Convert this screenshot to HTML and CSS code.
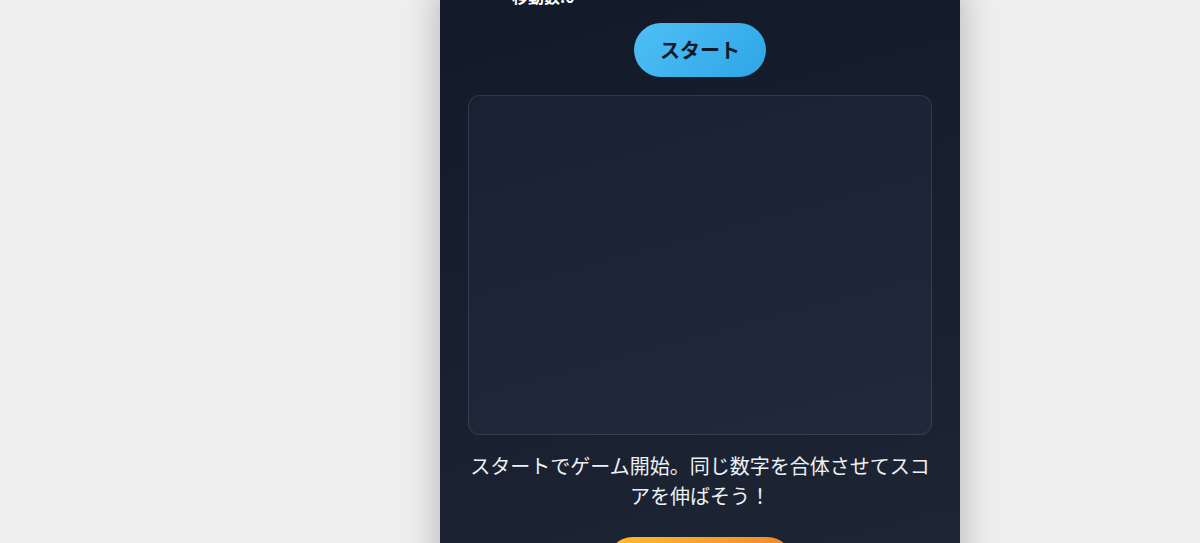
FILE: index.html
```html
<!DOCTYPE html>
<html lang="ja">
<head>
    <meta charset="UTF-8">
    <meta name="viewport" content="width=device-width, initial-scale=1.0">
    <title>2048</title>
    <link rel="stylesheet" href="styles.css">
</head>
<body>
    <div class="page">
        <div class="app">
            <div class="stats">
                <span class="stat">移動数:0</span>
            </div>

            <div class="controls">
                <button class="btn btn-start">スタート</button>
            </div>

            <div id="board" class="board"></div>

            <p class="hint">スタートでゲーム開始。同じ数字を合体させてスコアを伸ばそう！</p>

            <div class="controls">
                <button class="btn btn-reset">リセット</button>
            </div>
        </div>
    </div>
</body>
</html>
```

FILE: styles.css
```css
html, body {
    margin: 0;
    padding: 0;
}
body {
    font-family: "Noto Sans CJK JP", "Noto Sans", sans-serif;
    background-color: #efefef;
    overflow: hidden;
}
.page {
    display: flex;
    justify-content: center;
    padding-left: 200px;
}
.app {
    width: 520px;
    margin-top: -14px;
    padding: 0 28px 40px;
    box-sizing: border-box;
    min-height: 600px;
    background: linear-gradient(165deg, #121929 0%, #19202f 55%, #1f2838 100%);
    box-shadow: 0 0 36px rgba(0, 0, 0, 0.26);
    color: #eef1f5;
}
.stats {
    display: flex;
    padding-left: 44px;
    height: 21px;
}
.stat {
    font-size: 16px;
    font-weight: bold;
    line-height: 20px;
    color: #ffffff;
}
.controls {
    display: flex;
    justify-content: center;
}
.btn {
    font-family: inherit;
    font-size: 20px;
    font-weight: bold;
    border: none;
    border-radius: 27px;
    height: 54px;
    padding: 0 26px 2px;
    color: #111827;
    cursor: pointer;
}
.btn-start {
    margin-top: 16px;
    width: 132px;
    background: linear-gradient(135deg, #4fc0f6, #2da5e6);
}
.btn-reset {
    width: 188px;
    background: linear-gradient(90deg, #fbbf2a, #f0892b);
}
.board {
    margin-top: 18px;
    height: 340px;
    border: 1px solid rgba(255, 255, 255, 0.1);
    border-radius: 12px;
    background: rgba(130, 160, 210, 0.05);
    box-sizing: border-box;
}
.hint {
    margin: 16px 0 26px;
    font-size: 20px;
    line-height: 30px;
    text-align: center;
    color: #eef1f5;
}
```
